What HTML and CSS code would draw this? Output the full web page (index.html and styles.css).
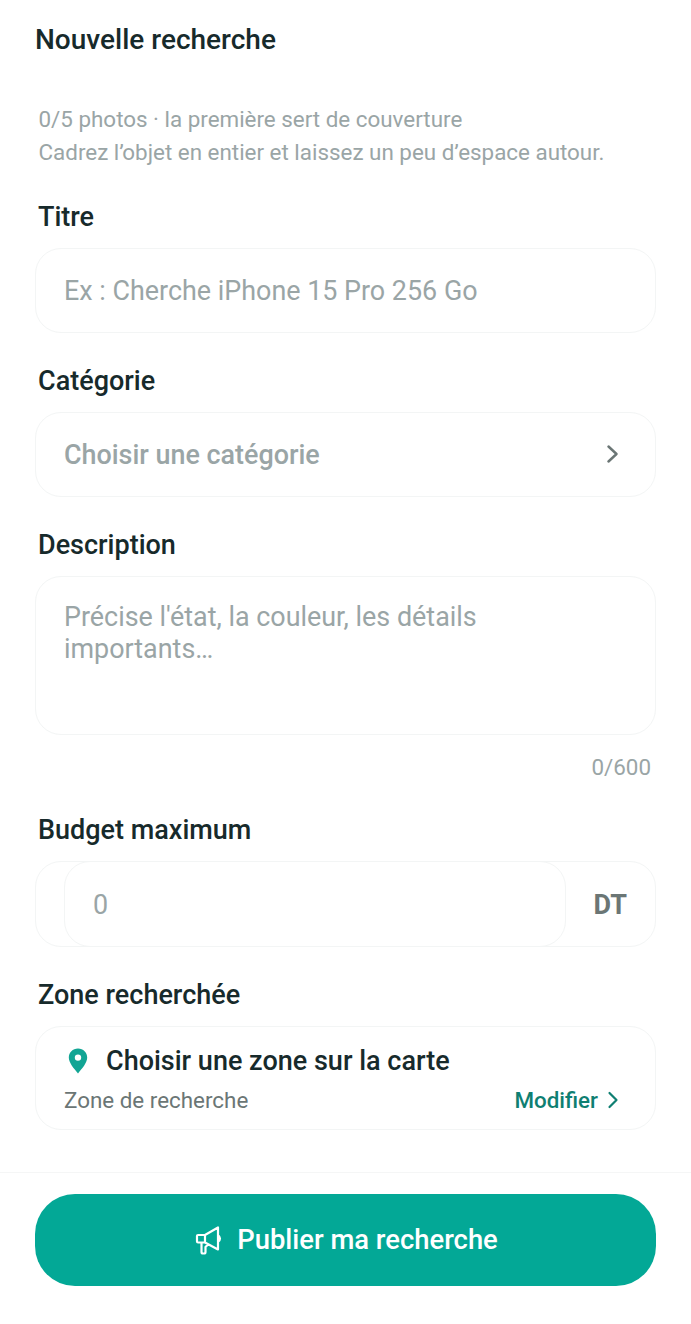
FILE: index.html
```html
<!DOCTYPE html>
<html lang="fr">
    <head>
        <meta charset="UTF-8" />
        <meta name="viewport" content="width=device-width, initial-scale=1.0" />
        <title>Nouvelle recherche</title>
        <link rel="stylesheet" href="styles.css">
    </head>
    <body>
        <div id="main">
            <h1 class="page-title">Nouvelle recherche</h1>

            <p class="hint">0/5 photos · la première sert de couverture<br />Cadrez l’objet en entier et laissez un peu d’espace autour.</p>

            <div class="label label-titre">Titre</div>
            <div class="field">
                <span class="placeholder">Ex : Cherche iPhone 15 Pro 256 Go</span>
            </div>

            <div class="label">Catégorie</div>
            <div class="field field-select">
                <span class="placeholder placeholder-strong">Choisir une catégorie</span>
                <svg class="chevron" width="14" height="20" viewBox="0 0 14 20">
                    <path d="M2.5 1.5 L10.5 9 L2.5 16.5" fill="none" stroke="#6b7675" stroke-width="2.4" stroke-linecap="round" stroke-linejoin="round" />
                </svg>
            </div>

            <div class="label">Description</div>
            <div class="field field-area">
                <span class="placeholder">Précise l'état, la couleur, les détails importants…</span>
            </div>
            <div class="counter">0/600</div>

            <div class="label label-budget">Budget maximum</div>
            <div class="budget">
                <div class="budget-input">
                    <span class="placeholder">0</span>
                </div>
                <span class="budget-unit">DT</span>
            </div>

            <div class="label">Zone recherchée</div>
            <div class="zone">
                <div class="zone-top">
                    <svg class="pin" width="20" height="26" viewBox="0 0 20 26">
                        <path fill-rule="evenodd" d="M10 0.5 C4.7 0.5 0.8 4.5 0.8 9.6 C0.8 15 6 20.6 10 25.5 C14 20.6 19.2 15 19.2 9.6 C19.2 4.5 15.3 0.5 10 0.5 Z M10 6.4 A3.2 3.2 0 1 1 10 12.8 A3.2 3.2 0 1 1 10 6.4 Z" fill="#12a594" />
                    </svg>
                    <span class="zone-title">Choisir une zone sur la carte</span>
                </div>
                <div class="zone-bottom">
                    <span class="zone-sub">Zone de recherche</span>
                    <span class="zone-link">
                        Modifier
                        <svg width="12" height="18" viewBox="0 0 12 18">
                            <path d="M2.5 2 L9.5 9 L2.5 16" fill="none" stroke="#0f7f72" stroke-width="2.2" stroke-linecap="round" stroke-linejoin="round" />
                        </svg>
                    </span>
                </div>
            </div>
        </div>

        <!-- Bottom bar -->
        <div class="footer">
            <div class="publish">
                <svg class="publish-icon" width="30" height="30" viewBox="-2 0 30 30">
                    <path d="M3 10 H10 L23 2.5 V24.5 L10 17.5 H3 Q2 17.5 2 16.5 V11 Q2 10 3 10 Z M10 10 V17.5 M6.5 17.5 V27 Q6.5 28.5 8 28.5 H9 Q10.5 28.5 10.5 27 V22 L13 19.5 M23 10 Q27 13.5 23 17" fill="none" stroke="#fff" stroke-width="2.2" stroke-linejoin="round" stroke-linecap="round" />
                </svg>
                <span>Publier ma recherche</span>
            </div>
        </div>
    </body>
</html>
```

FILE: styles.css
```css
body {
    font-family: "Roboto", "Liberation Sans", sans-serif;
    background-color: #fff;
    margin: 0;
    padding: 0;
    color: #172a2b;
}

#main {
    padding: 0 35px;
}

.page-title {
    margin: 0;
    padding-top: 24px;
    font-size: 28px;
    line-height: 32px;
    font-weight: 500;
}

.hint {
    margin: 47px 0 0 3.5px;
    font-size: 22.4px;
    line-height: 33px;
    color: #9aa5a6;
}

.label {
    margin: 32px 0 15px 3px;
    font-size: 27px;
    line-height: 32px;
    font-weight: 500;
}

.label-budget {
    margin-top: 33px;
}

.field {
    display: flex;
    align-items: center;
    justify-content: space-between;
    box-sizing: border-box;
    height: 85px;
    padding: 0 35px 0 28px;
    border: 1px solid #f3f5f5;
    border-radius: 26px;
}

.field-area {
    display: block;
    height: 159px;
    padding-top: 24px;
    padding-right: 120px;
}

.placeholder {
    font-size: 26.9px;
    line-height: 32px;
    color: #9aa5a6;
}

.placeholder-strong {
    font-weight: 500;
}

.counter {
    margin: 18px 5px 0 0;
    text-align: right;
    font-size: 22.4px;
    line-height: 28px;
    color: #9aa5a6;
}

.budget {
    display: flex;
    align-items: stretch;
    box-sizing: border-box;
    height: 86px;
    padding-left: 28px;
    border: 1px solid #f3f5f5;
    border-radius: 26px;
}

.budget-input {
    flex: 1;
    display: flex;
    align-items: center;
    padding: 2px 0 0 28px;
    margin: -1px 0;
    border: 1px solid #f3f5f5;
    border-radius: 26px;
}

.budget-unit {
    align-self: center;
    width: 89px;
    padding: 2px 28px 0 0;
    box-sizing: border-box;
    text-align: right;
    font-size: 27px;
    font-weight: 700;
    color: #6b7675;
}

.zone {
    box-sizing: border-box;
    height: 104px;
    padding: 18px 36px 0 28px;
    border: 1px solid #f3f5f5;
    border-radius: 26px;
}

.zone-top {
    display: flex;
    align-items: center;
    gap: 18px;
    padding-left: 4px;
}

.zone-title {
    font-size: 27px;
    line-height: 32px;
    font-weight: 500;
}

.zone-bottom {
    display: flex;
    align-items: center;
    justify-content: space-between;
    margin-top: 9px;
}

.zone-sub {
    font-size: 22.4px;
    line-height: 28px;
    color: #6b7675;
}

.zone-link {
    display: flex;
    align-items: center;
    gap: 9px;
    font-size: 22.4px;
    line-height: 28px;
    font-weight: 500;
    color: #0f7f72;
}

.footer {
    margin-top: 42px;
    padding: 21px 35px 0;
    border-top: 1px solid #f5f6f6;
}

.publish {
    display: flex;
    align-items: center;
    justify-content: center;
    gap: 14px;
    height: 92px;
    border-radius: 40px;
    background-color: #03a896;
    color: #fff;
    font-size: 27.4px;
    font-weight: 500;
}

.publish-icon {
    flex: none;
}
```
